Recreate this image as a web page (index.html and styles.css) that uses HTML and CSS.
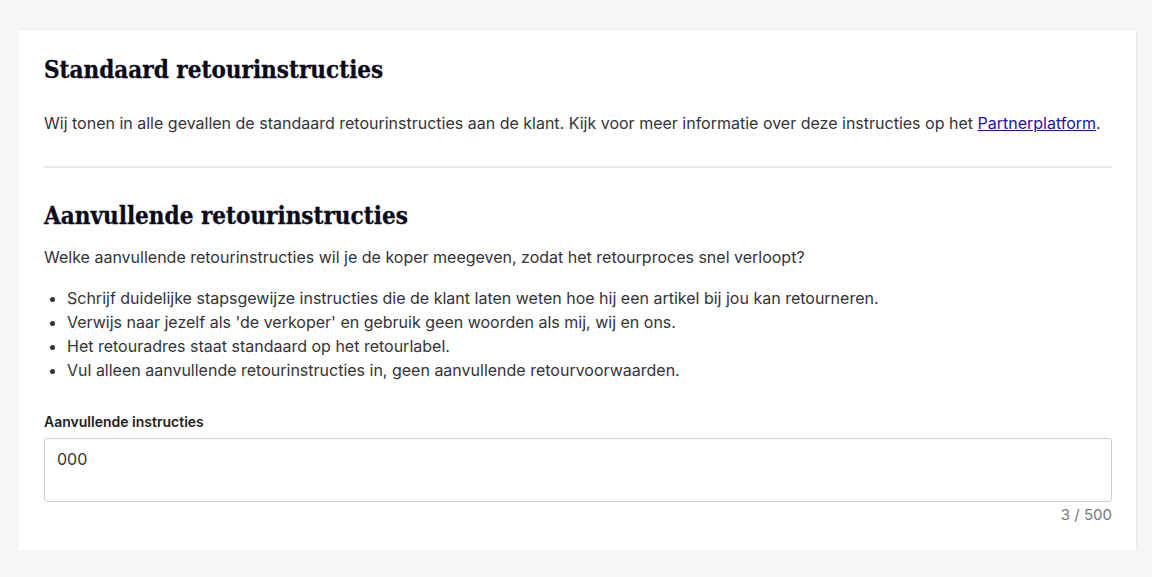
FILE: index.html
```html
<!DOCTYPE html>
<html lang="nl">
<head>
<meta charset="utf-8">
<title>Retourinstructies</title>
<link rel="stylesheet" href="styles.css">
</head>
<body>
<main class="page">
  <section class="card">
    <h2 class="title">Standaard retourinstructies</h2>
    <p class="text intro">Wij tonen in alle gevallen de standaard retourinstructies aan de klant. Kijk voor meer informatie over deze instructies op het <a href="#" class="link">Partnerplatform</a>.</p>
    <hr class="divider">
    <h2 class="title second">Aanvullende retourinstructies</h2>
    <p class="text question">Welke aanvullende retourinstructies wil je de koper meegeven, zodat het retourproces snel verloopt?</p>
    <ul class="tips">
      <li>Schrijf duidelijke stapsgewijze instructies die de klant laten weten hoe hij een artikel bij jou kan retourneren.</li>
      <li>Verwijs naar jezelf als 'de verkoper' en gebruik geen woorden als mij, wij en ons.</li>
      <li>Het retouradres staat standaard op het retourlabel.</li>
      <li>Vul alleen aanvullende retourinstructies in, geen aanvullende retourvoorwaarden.</li>
    </ul>
    <div class="field">
      <label class="label" for="instr">Aanvullende instructies</label>
      <textarea id="instr" class="textarea">000</textarea>
      <div class="counter">3 / 500</div>
    </div>
  </section>
</main>
</body>
</html>
```
FILE: styles.css
```css
html, body {
  margin: 0;
  padding: 0;
  background: #f6f6f6;
}
body {
  font-family: Inter, "Noto Sans", sans-serif;
  color: #333338;
}
.page {
  padding: 29px 16px 0 19px;
}
.card {
  background: #fff;
  width: 1117px;
  box-sizing: border-box;
  padding: 24px 24px 25px 25px;
  box-shadow: 1px 2px 2px rgba(0,0,0,0.08);
  border-top: 1px solid #ececec;
}
.title {
  font-family: "DejaVu Serif Condensed", "DejaVu Serif", serif;
  font-weight: bold;
  font-size: 24px;
  line-height: 32px;
  color: #0a0a1a;
  margin: 0;
  -webkit-text-stroke: 0.3px #0a0a1a;
}
.text {
  font-size: 16px;
  line-height: 24px;
  margin: 0;
}
.intro {
  margin-top: 25px;
}
.link {
  color: #1a14a8;
  text-decoration: underline;
}
.divider {
  border: 0;
  height: 2px;
  background: #e8e8e8;
  margin: 31px 0 0 0;
}
.second {
  margin-top: 32px;
}
.question {
  margin-top: 13px;
}
.tips {
  margin: 17px 0 0 0;
  padding-left: 23px;
  font-size: 16px;
  line-height: 24px;
}
.field {
  margin-top: 30px;
}
.label {
  display: block;
  font-size: 14px;
  font-weight: 600;
  line-height: 20px;
  color: #222;
}
.textarea {
  display: block;
  width: 100%;
  box-sizing: border-box;
  height: 64px;
  margin-top: 6px;
  border: 1px solid #ccc;
  border-radius: 3px;
  padding: 9px 12px;
  font-family: Inter, "Noto Sans", sans-serif;
  font-size: 16px;
  line-height: 22px;
  color: #333;
  resize: none;
}
.counter {
  text-align: right;
  font-size: 15px;
  line-height: 20px;
  margin-top: 3px;
  color: #777;
}
```
